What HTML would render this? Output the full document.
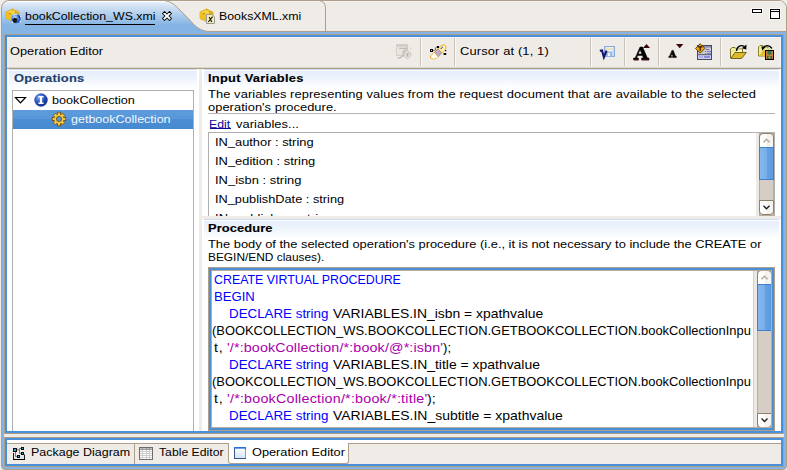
<!DOCTYPE html>
<html>
<head>
<meta charset="utf-8">
<title>Operation Editor</title>
<style>
html,body{margin:0;padding:0;}
body{width:787px;height:470px;overflow:hidden;background:#EFEBE7;position:relative;font-family:"Liberation Sans",sans-serif;font-size:11.5px;color:#000;}
div,span,svg{position:absolute;box-sizing:border-box;}
.t{white-space:pre;line-height:14px;height:14px;transform-origin:0 0;}
.b{font-weight:bold;}
/* outer tab folder */
#outer{left:1px;top:0;width:786px;height:470px;border:1px solid #AE9F8B;border-radius:8px 8px 4px 4px;background:linear-gradient(to bottom,#F3F7FC 0px,#DCE8F6 3px,#85B4E4 24px,#85B4E4 100%);overflow:hidden;}
#box1{left:4px;top:34px;width:780px;height:400px;border:1px solid #AE9F8B;background:#4A90D9;}
#c1{left:7px;top:37px;width:774px;height:394px;background:#EFEBE7;overflow:hidden;}
#gap{left:4px;top:434px;width:780px;height:3px;background:#EFEBE7;}
#box2{left:4px;top:437px;width:780px;height:30px;border:1px solid #AE9F8B;background:#4A90D9;}
#c2{left:7px;top:440px;width:774px;height:24px;background:#EFEBE7;overflow:hidden;}
.sep{width:2px;height:28px;top:1px;border-left:1px solid #C9C2B8;border-right:1px solid #FBFAF9;}
.panel{background:#fff;overflow:hidden;}
.grad{left:2px;top:0;right:2px;height:22px;background:linear-gradient(to bottom,#C9DBF2 0,#C9DBF2 1px,#FFFFFF 1px,#FFFFFF 2px,#E8EFFA 2px,#EAF1FA 7px,#fff 19px);}
.c{left:2px;transform-origin:0 0;white-space:pre;font-size:13px;line-height:17px;height:17px;color:#000;}
.k{color:#0000FF;}
.s{color:#AA00AA;}
.c span{position:static;}
.sbtn{width:15px;border:1px solid #8F806C;background:linear-gradient(to right,#FFFFFF 0,#FDFCFB 50%,#F3F0EC 55%,#F7F5F2 100%);}
.thumb{width:15px;border:1px solid #3F7FCB;background:linear-gradient(to right,#86B8EE 0,#78AEE9 50%,#64A0E3 52%,#5C9AE0 100%);}
/*FIT*/
#t_tab1{left:22.50px;top:8px;letter-spacing:0.0px;transform:scaleX(1.075);-webkit-text-stroke:0.0px}
#t_tab2{left:216.50px;top:8px;letter-spacing:0.0px;transform:scaleX(1.0733);-webkit-text-stroke:0.0px}
#t_oped{left:2.70px;top:7px;letter-spacing:0.0px;transform:scaleX(1.112);-webkit-text-stroke:0.0px}
#t_cursor{left:453.40px;top:7px;letter-spacing:0.124px;transform:scaleX(1.12);-webkit-text-stroke:0.0px}
#t_ops{left:7.00px;top:2px;letter-spacing:0.218px;transform:scaleX(1.12);-webkit-text-stroke:0.15px}
#t_tree1{left:39.30px;top:2px;letter-spacing:0.0px;transform:scaleX(1.0986);-webkit-text-stroke:0.0px}
#t_tree2{left:57.60px;top:21px;letter-spacing:0.0px;transform:scaleX(1.089);-webkit-text-stroke:0.0px}
#t_iv{left:5.50px;top:2px;letter-spacing:0.241px;transform:scaleX(1.12);-webkit-text-stroke:0.15px}
#t_d1{left:6.40px;top:18px;letter-spacing:0.078px;transform:scaleX(1.12);-webkit-text-stroke:0.0px}
#t_d2{left:5.50px;top:31px;letter-spacing:0.04px;transform:scaleX(1.12);-webkit-text-stroke:0.0px}
#t_edit{left:7.20px;top:48px;letter-spacing:0.0px;transform:scaleX(1.0684);-webkit-text-stroke:0.0px}
#t_vars{left:33.60px;top:48px;letter-spacing:0.049px;transform:scaleX(1.12);-webkit-text-stroke:0.0px}
#t_l1{left:5.80px;top:2px;letter-spacing:0.0px;transform:scaleX(1.1172);-webkit-text-stroke:0.0px}
#t_l2{left:5.80px;top:21px;letter-spacing:0.002px;transform:scaleX(1.12);-webkit-text-stroke:0.0px}
#t_l3{left:5.60px;top:40px;letter-spacing:0.03px;transform:scaleX(1.12);-webkit-text-stroke:0.0px}
#t_l4{left:5.60px;top:59px;letter-spacing:0.0px;transform:scaleX(1.1096);-webkit-text-stroke:0.0px}
#t_l5{left:5.60px;top:78px;letter-spacing:0.146px;transform:scaleX(1.12);-webkit-text-stroke:0.0px}
#t_proc{left:5.60px;top:2px;letter-spacing:0.087px;transform:scaleX(1.12);-webkit-text-stroke:0.15px}
#t_p1{left:5.80px;top:18px;letter-spacing:0.0px;transform:scaleX(1.1184);-webkit-text-stroke:0.0px}
#t_p2{left:5.60px;top:31px;letter-spacing:0.0px;transform:scaleX(1.0342);-webkit-text-stroke:0.0px}
#c1l{left:1.50px;top:0px;letter-spacing:0.0px;transform:scaleX(0.9523);-webkit-text-stroke:0.0px}
#c2l{left:1.50px;top:17px;letter-spacing:0.0px;transform:scaleX(1.0077);-webkit-text-stroke:0.0px}
#c3a{left:17.30px;top:34px;letter-spacing:-0.0px;transform:scaleX(1.0263);-webkit-text-stroke:0.0px}
#c3b{left:120.70px;top:34px;letter-spacing:0.0px;transform:scaleX(1.0689);-webkit-text-stroke:0.0px}
#c4l{left:0.40px;top:51px;letter-spacing:0.0px;transform:scaleX(0.9932);-webkit-text-stroke:0.0px}
#c5a{left:1.80px;top:68px;letter-spacing:0.8px;transform:scaleX(1.1);-webkit-text-stroke:0.0px}
#c5b{left:14.50px;top:68px;letter-spacing:0.121px;transform:scaleX(1.1);-webkit-text-stroke:0.0px}
#c5c{left:230.80px;top:68px;letter-spacing:0.0px;transform:scaleX(1.0143);-webkit-text-stroke:0.0px}
#c6a{left:17.30px;top:85px;letter-spacing:-0.0px;transform:scaleX(1.0263);-webkit-text-stroke:0.0px}
#c6b{left:120.70px;top:85px;letter-spacing:0.0px;transform:scaleX(1.072);-webkit-text-stroke:0.0px}
#c7l{left:0.40px;top:102px;letter-spacing:0.0px;transform:scaleX(0.9932);-webkit-text-stroke:0.0px}
#c8a{left:1.80px;top:119px;letter-spacing:0.8px;transform:scaleX(1.1);-webkit-text-stroke:0.0px}
#c8b{left:14.50px;top:119px;letter-spacing:0.196px;transform:scaleX(1.1);-webkit-text-stroke:0.0px}
#c8c{left:214.70px;top:119px;letter-spacing:0.0px;transform:scaleX(1.1);-webkit-text-stroke:0.0px}
#c9a{left:17.30px;top:136px;letter-spacing:-0.0px;transform:scaleX(1.0263);-webkit-text-stroke:0.0px}
#c9b{left:120.70px;top:136px;letter-spacing:0.0px;transform:scaleX(1.0738);-webkit-text-stroke:0.0px}
#c10l{left:0.40px;top:153px;letter-spacing:0.0px;transform:scaleX(0.9932);-webkit-text-stroke:0.0px}
#t_b1{left:23.60px;top:5px;letter-spacing:0.0px;transform:scaleX(1.0844);-webkit-text-stroke:0.0px}
#t_b2{left:152.20px;top:5px;letter-spacing:0.0px;transform:scaleX(1.0623);-webkit-text-stroke:0.0px}
#t_b3{left:244.50px;top:5px;letter-spacing:0.0px;transform:scaleX(1.1096);-webkit-text-stroke:0.0px}
/*ENDFIT*/
</style>
</head>
<body>
<div id="outer">
<svg id="tabs" style="left:-2px;top:-1px" width="787" height="33" viewBox="0 0 787 33">
  <defs>
    <radialGradient id="globe" cx="0.4" cy="0.35" r="0.7"><stop offset="0" stop-color="#C4DEFF"/><stop offset="0.45" stop-color="#4A80EC"/><stop offset="1" stop-color="#1236A8"/></radialGradient>
    <linearGradient id="cubeF" x1="0" y1="0" x2="1" y2="0"><stop offset="0" stop-color="#E9B71C"/><stop offset="1" stop-color="#C9930E"/></linearGradient>
  </defs>
  <!-- inactive area -->
  <path d="M164.5,0 C169.5,1 174,4 177.5,7.5 L191.2,21.5 C195,26.5 201,31 208.5,31.5 L787,31.5 L787,0 Z" fill="#EFEBE7"/>
  <path d="M164.5,0.5 C169.5,1 174,4 177.5,7.5 L191.2,21.5 C195,26.5 201,31 208.5,31.5 L787,31.5" fill="none" stroke="#AE9F8B" stroke-width="1"/>
  <rect x="170" y="1" width="612" height="1" fill="#F5F3EF"/>
  <path d="M319,0.5 Q325.5,1.5 325.5,8 L325.5,31" fill="none" stroke="#AE9F8B" stroke-width="1"/>
  <!-- white highlight under top border of active tab -->
  <rect x="7" y="1" width="158" height="1" fill="#FFFFFF" opacity="0.8"/>
  <!-- tab icon 1: cube + globe -->
  <g id="ic_tab1">
    <path d="M6,12.2 L12.5,9 L19,12.2 L19,18.3 L12.5,21.3 L6,18.3 Z" fill="#E8B41A" stroke="#C9940F" stroke-width="0.6"/>
    <path d="M6,12.2 L12.5,9 L19,12.2 L12.5,15 Z" fill="#F5D244" stroke="#D9A81C" stroke-width="0.5"/>
    <path d="M6,12.2 L12.5,15 L12.5,21.3 L6,18.3 Z" fill="#EFC022"/>
    <path d="M12.5,15 L19,12.2 L19,18.3 L12.5,21.3 Z" fill="#D9A414"/>
    <rect x="9" y="13" width="1.6" height="1" fill="#B07C08"/><rect x="15" y="11.6" width="1.6" height="1" fill="#B07C08"/><rect x="12" y="9.6" width="1.2" height="0.8" fill="#C08A10"/>
    <circle cx="16" cy="18.8" r="5" fill="url(#globe)"/>
    <path d="M12.4,19.6 l2.2,-1.8 l2.6,1 l-0.4,2.6 l-2.2,1.6 l-1.6,-1.2 z" fill="#15150A"/>
    <path d="M18,14.6 l2,1.4 l0.6,2.2 l-1.6,-0.6 z" fill="#20200C"/>
    <path d="M13,15.4 q2,-1.8 4,-1" fill="none" stroke="#D6ECFF" stroke-width="1"/>
    <circle cx="16" cy="18.8" r="5" fill="none" stroke="#9FD4FF" stroke-width="0.7" opacity="0.85"/>
    <circle cx="12.4" cy="22.2" r="0.8" fill="#E8FAFF"/><circle cx="20.4" cy="21.4" r="0.7" fill="#E8FAFF"/><circle cx="20.6" cy="16.4" r="0.6" fill="#E8FAFF"/>
  </g>
  <!-- close X -->
  <path transform="translate(162.5,11.5)" d="M0,2 L2,0 L4.5,2.5 L7,0 L9,2 L6.5,4.5 L9,7 L7,9 L4.5,6.5 L2,9 L0,7 L2.5,4.5 Z" fill="#fff" stroke="#000" stroke-width="1.05" stroke-linejoin="round"/>
  <!-- tab icon 2 : cube + x doc -->
  <g id="ic_tab2">
    <path d="M200,12.2 L206.5,9 L213,12.2 L213,18.6 L206.5,21.6 L200,18.6 Z" fill="#E8B41A" stroke="#C9940F" stroke-width="0.6"/>
    <path d="M200,12.2 L206.5,9 L213,12.2 L206.5,15 Z" fill="#F5D244" stroke="#D9A81C" stroke-width="0.5"/>
    <path d="M200,12.2 L206.5,15 L206.5,21.6 L200,18.6 Z" fill="#EFC022"/>
    <path d="M206.5,15 L213,12.2 L213,18.6 L206.5,21.6 Z" fill="#D9A414"/>
    <rect x="203" y="13" width="1.6" height="1" fill="#B07C08"/><rect x="209" y="11.6" width="1.6" height="1" fill="#B07C08"/><rect x="206" y="9.6" width="1.2" height="0.8" fill="#C08A10"/>
    <path d="M206.5,14.5 L212,14.5 L214.5,17 L214.5,23.5 L206.5,23.5 Z" fill="#F4F0B4" stroke="#9A9A96" stroke-width="1"/>
    <path d="M208.3,22 L212.6,16.6 M209.2,17 L211.8,22" stroke="#111" stroke-width="1.1" fill="none"/>
  </g>
  <!-- min / max -->
  <rect x="751.5" y="8.5" width="11" height="5" fill="none" stroke="#FAF9F7" stroke-width="1"/>
  <rect x="752.5" y="9.5" width="9" height="3" fill="#fff" stroke="#000" stroke-width="1"/>
  <rect x="769.5" y="8.5" width="11" height="11" fill="none" stroke="#FAF9F7" stroke-width="1"/>
  <rect x="770.5" y="9.5" width="9" height="9" fill="#fff" stroke="#000" stroke-width="1"/>
  <rect x="771" y="11" width="8" height="1" fill="#000"/>
</svg>
<span class="t" id="t_tab1">bookCollection_WS.xmi</span>
<div style="left:23px;top:23px;width:130px;height:1px;background:#000"></div>
<span class="t" id="t_tab2">BooksXML.xmi</span>
</div>
<div id="box1"></div>
<div id="c1">
  <!-- header -->
  <span class="t" id="t_oped">Operation Editor</span>
  <div style="left:0;top:0;width:774px;height:1px;background:#F6F4F1"></div>
  <div style="left:773px;top:0;width:1px;height:31px;background:#F8F6F3"></div>
  <div style="left:0;top:30px;width:774px;height:1px;background:#DDD6CD"></div>
  <div style="left:0;top:31px;width:774px;height:1px;background:#AE9F8B"></div>
  <div class="sep" style="left:413px"></div>
  <div class="sep" style="left:447px"></div>
  <div class="sep" style="left:583px"></div>
  <div class="sep" style="left:617px"></div>
  <div class="sep" style="left:651px"></div>
  <div class="sep" style="left:713px"></div>
  <span class="t" id="t_cursor">Cursor at (1, 1)</span>
  <svg id="tb" style="left:0;top:0" width="774" height="31" viewBox="7 37 774 31">
    <defs>
      <linearGradient id="fl" x1="0" y1="1" x2="1" y2="0"><stop offset="0" stop-color="#FFFDE8"/><stop offset="0.35" stop-color="#FFD24A"/><stop offset="1" stop-color="#F09A1A"/></linearGradient>
      <linearGradient id="fold" x1="0" y1="0" x2="0" y2="1"><stop offset="0" stop-color="#F7EE9A"/><stop offset="1" stop-color="#D9B62E"/></linearGradient>
    </defs>
    <!-- 1 disabled filter/window icon -->
    <g id="ic1">
      <rect x="396.5" y="44.5" width="11" height="11" fill="#E9E6E1" stroke="#D3CFC9"/>
      <rect x="397" y="45" width="10" height="1.6" fill="#D0CCC6"/>
      <path d="M399.2,48.4 L406.4,48.4 L403.2,52 L403.2,55.6 L400.6,57.6 L397.6,58.2" fill="none" stroke="#BEBAB4" stroke-width="1.4"/>
      <path d="M407.5,46.5 L405,50.5" stroke="#C9C5BF" stroke-width="1.1"/>
      <path d="M406.6,50 L410.8,53 L410.8,56 L407.4,59 L404,56 L404,53 Z" fill="#E0DDD8" stroke="#C8C4BE" stroke-width="0.9"/>
      <path d="M406,54 h3 M407.5,54 v2.6" stroke="#B2AEA8" stroke-width="1"/>
      <path d="M409.6,47.4 L411,49" stroke="#CFCBC5"/>
    </g>
    <!-- 2 flashlight -->
    <g id="ic2">
      <path d="M430.3,58 L431,55.5 L440.5,46 L444.5,44.8 L446,46.2 L445.6,49 L437.5,57.2 L434,59.2 Z" fill="#FFE78A" stroke="#F2A228" stroke-width="0.9"/>
      <path d="M439.5,47.5 L444,45.6 L445.2,46.8 L444.6,49.4 L441.8,52 Z" fill="#FFF3B0"/>
      <path d="M430.8,57.6 L432,55.2 L436,51.4 L439.5,55 L436.8,57.6 L433.8,58.8 Z" fill="#FFFCE0"/>
      <path d="M431.2,57.4 L433,55 L435.4,57.4 L433.6,58.4 Z" fill="#FFFFFF"/>
      <path d="M434.6,52.4 L438,49 L441.8,53 L438.2,56.6 Z" fill="#BDB9C6" stroke="#9A7A68" stroke-width="0.6"/>
      <path d="M436,52.5 h1 M438,51.5 h1 M437.4,54 h1 M439.2,53.2 h1" stroke="#C77AD0" stroke-width="0.8"/>
      <circle cx="442.3" cy="47.4" r="0.7" fill="#3446C8"/><circle cx="441.2" cy="48.5" r="0.7" fill="#3446C8"/>
      <rect x="430" y="49" width="3" height="3" fill="#000"/><rect x="431" y="50" width="1" height="1" fill="#E8D820"/>
      <rect x="437" y="46" width="2" height="2" fill="#000"/>
      <rect x="443.6" y="53" width="2.6" height="2" fill="#000"/>
      <rect x="445" y="50" width="1.2" height="1.2" fill="#000"/>
      <path d="M433,50.5 L435.4,50 L435.8,47.4 L437,47" fill="none" stroke="#555" stroke-width="0.8"/>
    </g>
    <!-- 3 validate -->
    <g id="ic3">
      <rect x="604.5" y="46.5" width="10" height="10" fill="#C5D8F4" stroke="#88AADF"/>
      <rect x="606" y="47" width="7" height="4" fill="#F2F0E0"/>
      <rect x="606" y="48.5" width="7" height="1" fill="#E4D9A8"/>
      <rect x="606" y="52" width="6" height="4.5" fill="#9DBBEA"/>
      <rect x="608" y="53" width="2" height="3" fill="#F6F4EA"/>
      <path d="M599.8,50.8 L602,50.4 L603.9,57.2 L606.6,50.6" fill="none" stroke="#17176B" stroke-width="2.1" stroke-linejoin="miter"/>
    </g>
    <!-- 4 big A up -->
    <g id="ic4">
      <path d="M640,47 L642.6,47 L647.4,58 L649,58 L649,60 L641.6,60 L641.6,58 L643.4,58 L642.4,55.4 L637.6,55.4 L636.6,58 L638.4,58 L638.4,60 L633.6,60 L633.6,58 L635.2,58 Z M640.1,49.8 L638.2,54 L641.9,54 Z" fill="#000" fill-rule="evenodd" stroke="#000" stroke-width="0.5"/>
      <path d="M643,48 L646.5,44 L650,48 Z" fill="#3A0808"/>
      <rect x="634" y="59.3" width="4.6" height="1" fill="#501414"/><rect x="642" y="59.3" width="7" height="1" fill="#501414"/>
    </g>
    <!-- 5 small A down -->
    <g id="ic5">
      <path transform="translate(672.6,54) scale(0.9) translate(-672.8,-54)" d="M672,50 L673.6,50 L676,56.4 L677,56.4 L677,58 L672.6,58 L672.6,56.4 L673.4,56.4 L673,55.2 L671,55.2 L670.6,56.4 L671.6,56.4 L671.6,58 L668.6,58 L668.6,56.4 L669.4,56.4 Z M672,52.4 L671.4,54 L672.7,54 Z" fill="#000" fill-rule="evenodd" stroke="#000" stroke-width="0.5"/>
      <path d="M676,44 L683.4,44 L679.7,48.2 Z" fill="#3A0808"/>
    </g>
    <!-- 6 window w/ diamond -->
    <g id="ic6">
      <rect x="697.5" y="45.5" width="14" height="14" fill="#CBCBCB" stroke="#4A4A4A"/>
      <rect x="698" y="46" width="13" height="1.6" fill="#8C8CCB"/>
      <rect x="698" y="55" width="13" height="4" fill="#CFCFFF"/>
      <rect x="698" y="54.2" width="13" height="1" fill="#55555F"/>
      <path d="M706,49.5 h3" stroke="#6A6AC8" stroke-width="1"/>
      <path d="M705,51.5 h1 M707,51.5 h4 M705,53.4 h1 M707,53.4 h4" stroke="#7070D0" stroke-width="0.9"/>
      <path d="M699.5,57 h1 M701.5,57 h1 M704,57 h6" stroke="#4A4AA8" stroke-width="1"/>
      <path d="M700.2,43.7 L704.9,48.4 L700.2,53.1 L695.5,48.4 Z" fill="#F7A60C" stroke="#2E2004" stroke-width="0.8"/>
      <path d="M698.2,46.9 h4 M700.2,46.9 v3.8" stroke="#1E1400" stroke-width="1.2"/>
    </g>
    <!-- 7 open folder with arrow -->
    <g id="ic7">
      <path d="M730.5,58 L730.5,49 L732,47.5 L735,47.5 L736.5,49 L742.5,49 L742.5,52" fill="#F3EC9C" stroke="#7A7420" stroke-width="1"/>
      <rect x="737" y="49.5" width="5" height="2.5" fill="#FBF7C8"/>
      <path d="M730.8,58.5 L735,52.5 L746.3,52.5 L741.5,58.5 Z" fill="#DDB92C" stroke="#6E661C" stroke-width="1"/>
      <path d="M736.5,51 C737,46 741,44.5 744.5,46.5" fill="none" stroke="#000" stroke-width="1.4"/>
      <path d="M746.5,44.5 L746.3,49.5 L741.8,48.2 Z" fill="#000"/>
    </g>
    <!-- 8 folder + floppy -->
    <g id="ic8">
      <path d="M758.5,56 L758.5,47 L760,45.5 L763,45.5 L764.5,47 L768,47 L768,56 Z" fill="#F3EC9C" stroke="#8A8428" stroke-width="1"/>
      <path d="M759,56 L763,50 L768,50 L768,56 Z" fill="#E2C038"/>
      <path d="M762.5,48.5 C765,45 769,44.5 772,48.5" fill="none" stroke="#000" stroke-width="1.3"/>
      <path d="M761.3,46.3 L765.3,47.3 L762.3,50.6 Z" fill="#000"/>
      <path d="M766,49 C768,47 770,47 771.5,49 L771.5,51 L766,51 Z" fill="#D8E2A0"/>
      <rect x="765.5" y="50.5" width="8" height="9" fill="#C9803A" stroke="#000" stroke-width="1"/>
      <rect x="767.5" y="51" width="4" height="3.5" fill="#2F7A4A"/>
      <rect x="767" y="56" width="5" height="3" fill="#2F6A3A"/>
      <rect x="768.5" y="56.5" width="2" height="2" fill="#D89A50"/>
    </g>
  </svg>
  <!-- left panel (page origin 7,69) -->
  <div class="panel" id="pl" style="left:0;top:32px;width:192px;height:362px;"><div class="grad"></div>
    <span class="t b" id="t_ops" style="color:#24416E;">Operations</span>
    <div id="tree" style="left:5px;top:21px;width:182px;height:360px;border:1px solid #B0B0B0;background:#fff;">
      <div id="sel" style="left:0;top:19px;width:180px;height:19px;background:linear-gradient(to bottom,#5D9DDD 0,#5797D9 50%,#4C8ED3 50%,#4789CF 100%);"></div>
      <svg style="left:0;top:0" width="180" height="40" viewBox="13 91 180 40">
        <defs>
          <radialGradient id="ig" cx="0.35" cy="0.3" r="0.8"><stop offset="0" stop-color="#7FA6F0"/><stop offset="0.5" stop-color="#2C55C4"/><stop offset="1" stop-color="#0C2480"/></radialGradient>
        </defs>
        <path d="M15.5,97.5 L25.5,97.5 L20.5,102.8 Z" fill="#fff" stroke="#000" stroke-width="1.2" stroke-linejoin="miter"/>
        <circle cx="41" cy="100" r="6.5" fill="url(#ig)"/>
        <circle cx="41" cy="100" r="6.3" fill="none" stroke="#1A2E8A" stroke-width="0.6" opacity="0.7"/>
        <path d="M38.4,96 h5.2 v1.5 h-1.5 v5 h1.5 v1.5 h-5.2 v-1.5 h1.5 v-5 h-1.5 Z" fill="#fff"/>
        <!-- gear -->
        <g transform="translate(59,119)">
          <g fill="#F7C544" stroke="#6E4E08" stroke-width="0.8">
            <rect x="-1.6" y="-6.8" width="3.2" height="13.6"/>
            <rect x="-6.8" y="-1.6" width="13.6" height="3.2"/>
            <rect x="-1.6" y="-6.6" width="3.2" height="13.2" transform="rotate(45)"/>
            <rect x="-1.6" y="-6.6" width="3.2" height="13.2" transform="rotate(-45)"/>
          </g>
          <circle r="4.6" fill="#F7C544"/>
          <circle r="2.6" fill="#5495DB" stroke="#6E4E08" stroke-width="0.8"/>
        </g>
      </svg>
      <span class="t" id="t_tree1">bookCollection</span>
      <span class="t" id="t_tree2" style="color:#F4F8FD;">getbookCollection</span>
    </div>
  </div>
  <!-- right top (page origin 202,69) -->
  <div class="panel" id="pr1" style="left:195px;top:32px;width:579px;height:147px;"><div class="grad"></div>
    <span class="t b" id="t_iv">Input Variables</span>
    <span class="t" id="t_d1">The variables representing values from the request document that are available to the selected</span>
    <span class="t" id="t_d2">operation's procedure.</span>
    <div style="left:6px;top:44px;width:567px;height:1px;background:#B4B4B4"></div>
    <span class="t" id="t_edit" style="color:#0A0A96;">Edit</span>
    <div style="left:8px;top:59px;width:21px;height:1px;background:#0A0A96"></div>
    <span class="t" id="t_vars">variables...</span>
    <div id="list" style="left:6px;top:63px;width:567px;height:100px;border:1px solid #B0B0B0;background:#fff;overflow:hidden;">
      <span class="t" id="t_l1">IN_author : string</span>
      <span class="t" id="t_l2">IN_edition : string</span>
      <span class="t" id="t_l3">IN_isbn : string</span>
      <span class="t" id="t_l4">IN_publishDate : string</span>
      <span class="t" id="t_l5">IN_publisher : string</span>
      <div class="sb" style="left:547px;top:0;width:18px;height:83px;background:#EDEAE5;">
        <div style="left:3px;top:0;width:15px;height:83px;background:#D6CEC4;border:1px solid #B8AC9C;"></div>
        <div class="sbtn" style="left:3px;top:0;height:15px;border-radius:4px 4px 0 0;"></div>
        <div class="thumb" style="left:3px;top:14px;height:33px;"></div>
        <div class="sbtn" style="left:3px;top:67px;height:15px;border-radius:0 0 4px 4px;"></div>
        <svg style="left:3px;top:0" width="15" height="83" viewBox="0 0 15 83">
          <path d="M4.5,9.2 L7.5,6.2 L10.5,9.2" fill="none" stroke="#B5A796" stroke-width="1.4"/>
          <path d="M4.5,72.8 L7.5,75.8 L10.5,72.8" fill="none" stroke="#1A1A1A" stroke-width="1.3"/>
        </svg>
      </div>
    </div>
  </div>
  <!-- right bottom (page origin 202,219) -->
  <div class="panel" id="pr2" style="left:195px;top:182px;width:579px;height:212px;"><div class="grad"></div>
    <span class="t b" id="t_proc">Procedure</span>
    <span class="t" id="t_p1">The body of the selected operation's procedure (i.e., it is not necessary to include the CREATE or</span>
    <span class="t" id="t_p2">BEGIN/END clauses).</span>
    <div id="code" style="left:6px;top:48px;width:567px;height:164px;border:1px solid #AE9F8B;background:#4A90D9;">
      <div id="codein" style="left:2px;top:2px;width:561px;height:158px;border:1px solid #B9AB97;background:#fff;overflow:hidden;">
        <div id="codetxt" style="left:0;top:0;width:541px;height:156px;overflow:hidden;">
          <span class="c k" id="c1l">CREATE VIRTUAL PROCEDURE</span>
          <span class="c k" id="c2l">BEGIN</span>
          <span class="c k" id="c3a">DECLARE string</span><span class="c" id="c3b">VARIABLES.IN_isbn = xpathvalue</span>
          <span class="c" id="c4l">(BOOKCOLLECTION_WS.BOOKCOLLECTION.GETBOOKCOLLECTION.bookCollectionInpu</span>
          <span class="c" id="c5a">t,</span><span class="c s" id="c5b">'/*:bookCollection/*:book/@*:isbn'</span><span class="c" id="c5c">);</span>
          <span class="c k" id="c6a">DECLARE string</span><span class="c" id="c6b">VARIABLES.IN_title = xpathvalue</span>
          <span class="c" id="c7l">(BOOKCOLLECTION_WS.BOOKCOLLECTION.GETBOOKCOLLECTION.bookCollectionInpu</span>
          <span class="c" id="c8a">t,</span><span class="c s" id="c8b">'/*:bookCollection/*:book/*:title'</span><span class="c" id="c8c">);</span>
          <span class="c k" id="c9a">DECLARE string</span><span class="c" id="c9b">VARIABLES.IN_subtitle = xpathvalue</span>
          <span class="c" id="c10l">(BOOKCOLLECTION_WS.BOOKCOLLECTION.GETBOOKCOLLECTION.bookCollectionInpu</span>
        </div>
        <div style="left:541px;top:0;width:1px;height:156px;background:#D9D0C4"></div>
        <div class="sb" style="left:542px;top:0;width:18px;height:156px;background:#EDEAE5;">
          <div style="left:3px;top:0;width:15px;height:156px;background:#D6CEC4;border:1px solid #B8AC9C;"></div>
          <div class="sbtn" style="left:3px;top:-1px;height:15px;border-radius:4px 4px 0 0;"></div>
          <div class="thumb" style="left:3px;top:13px;height:47px;"></div>
          <div class="sbtn" style="left:3px;top:142px;height:15px;border-radius:0 0 4px 4px;"></div>
          <svg style="left:3px;top:0" width="15" height="156" viewBox="0 0 15 156">
            <path d="M4.5,8.2 L7.5,5.2 L10.5,8.2" fill="none" stroke="#B5A796" stroke-width="1.4"/>
            <path d="M4.5,147.5 L7.5,150.5 L10.5,147.5" fill="none" stroke="#1A1A1A" stroke-width="1.3"/>
          </svg>
        </div>
      </div>
    </div>
  </div>
</div>
<div id="gap"></div>
<div id="box2"></div>
<div id="c2">
  <div style="left:0;top:0;width:774px;height:3px;background:#fff"></div>
  <div style="left:0;top:3px;width:774px;height:1px;background:#AE9F8B"></div>
  <div style="left:127px;top:3px;width:1px;height:21px;background:#AE9F8B"></div>
  <!-- active tab -->
  <div style="left:221px;top:3px;width:121px;height:21px;background:#fff;border:1px solid #AE9F8B;border-top:none;border-radius:0 0 3px 3px;"></div>
  <div style="left:222px;top:3px;width:119px;height:1px;background:#fff"></div>
  <svg style="left:0;top:0" width="774" height="24" viewBox="7 440 774 24">
    <!-- package diagram icon -->
    <g id="ic_pkg">
      <rect x="14" y="455" width="10" height="4" fill="#E4E4E4"/>
      <path d="M13.5,453 L13.5,459.5 L24.5,459.5 L24.5,454.5" fill="none" stroke="#1A1A1A" stroke-width="1"/>
      <path d="M13,459.5 h12" stroke="#000" stroke-width="1"/>
      <path d="M17,449.8 h2.5 M19.5,448.5 h1.5 M19.5,448.5 v5 M19.5,453.4 h1.5 M15.5,452 v4.5 h1.5" fill="none" stroke="#6A6A6A" stroke-width="0.9"/>
      <rect x="13" y="448" width="4" height="4" fill="#0A0A0A"/><rect x="14" y="449" width="2" height="2" fill="#2AA6E0"/>
      <rect x="21" y="447" width="3" height="3" fill="#0A0A0A"/><rect x="22" y="448" width="1" height="1" fill="#2AA6E0"/>
      <rect x="21" y="452" width="3" height="3" fill="#0A0A0A"/><rect x="22" y="453" width="1" height="1" fill="#2AA6E0"/>
      <rect x="17" y="455" width="3" height="3" fill="#0A0A0A"/><rect x="18" y="456" width="1" height="1" fill="#2AA6E0"/>
    </g>
    <!-- table icon -->
    <g id="ic_tbl" shape-rendering="crispEdges">
      <rect x="139" y="447" width="14" height="13" rx="1" fill="#6C6C6C"/>
      <rect x="140" y="448" width="12" height="1" fill="#8C8C8C"/>
      <rect x="140" y="449" width="12" height="10" fill="#CDCDCD"/>
      <rect x="140" y="449" width="12" height="1" fill="#9C9C9C"/>
      <rect x="140" y="448" width="2" height="1" fill="#C9C9C9"/><rect x="143" y="448" width="3" height="1" fill="#C9C9C9"/><rect x="147" y="448" width="2" height="1" fill="#C9C9C9"/><rect x="150" y="448" width="2" height="1" fill="#C9C9C9"/>
      <rect x="140" y="450" width="2" height="1" fill="#fff"/><rect x="143" y="450" width="3" height="1" fill="#fff"/><rect x="147" y="450" width="2" height="1" fill="#fff"/><rect x="150" y="450" width="2" height="1" fill="#fff"/><rect x="140" y="452" width="2" height="1" fill="#fff"/><rect x="143" y="452" width="3" height="1" fill="#fff"/><rect x="147" y="452" width="2" height="1" fill="#fff"/><rect x="150" y="452" width="2" height="1" fill="#fff"/><rect x="140" y="454" width="2" height="1" fill="#fff"/><rect x="143" y="454" width="3" height="1" fill="#fff"/><rect x="147" y="454" width="2" height="1" fill="#fff"/><rect x="150" y="454" width="2" height="1" fill="#fff"/><rect x="140" y="456" width="2" height="1" fill="#fff"/><rect x="143" y="456" width="3" height="1" fill="#fff"/><rect x="147" y="456" width="2" height="1" fill="#fff"/><rect x="150" y="456" width="2" height="1" fill="#fff"/><rect x="140" y="458" width="2" height="1" fill="#fff"/><rect x="143" y="458" width="3" height="1" fill="#fff"/><rect x="147" y="458" width="2" height="1" fill="#fff"/><rect x="150" y="458" width="2" height="1" fill="#fff"/>
    </g>
    <!-- operation editor icon -->
    <g id="ic_op">
      <linearGradient id="opg" x1="0" y1="0" x2="0" y2="1"><stop offset="0" stop-color="#FFFFFF"/><stop offset="1" stop-color="#CFE4FB"/></linearGradient>
      <rect x="234.5" y="447.5" width="11" height="11" fill="url(#opg)" stroke="#3F5482" stroke-width="1"/>
      <rect x="234" y="447" width="12" height="2" fill="#2F6FD6"/>
      <rect x="235" y="448" width="10" height="1" fill="#6FA2EE"/>
      <path d="M245.5,449.5 v8.5" stroke="#B79B5C" stroke-width="1"/>
    </g>
  </svg>
  <span class="t" id="t_b1">Package Diagram</span>
  <span class="t" id="t_b2">Table Editor</span>
  <span class="t" id="t_b3">Operation Editor</span>
</div>
</body>
</html>
